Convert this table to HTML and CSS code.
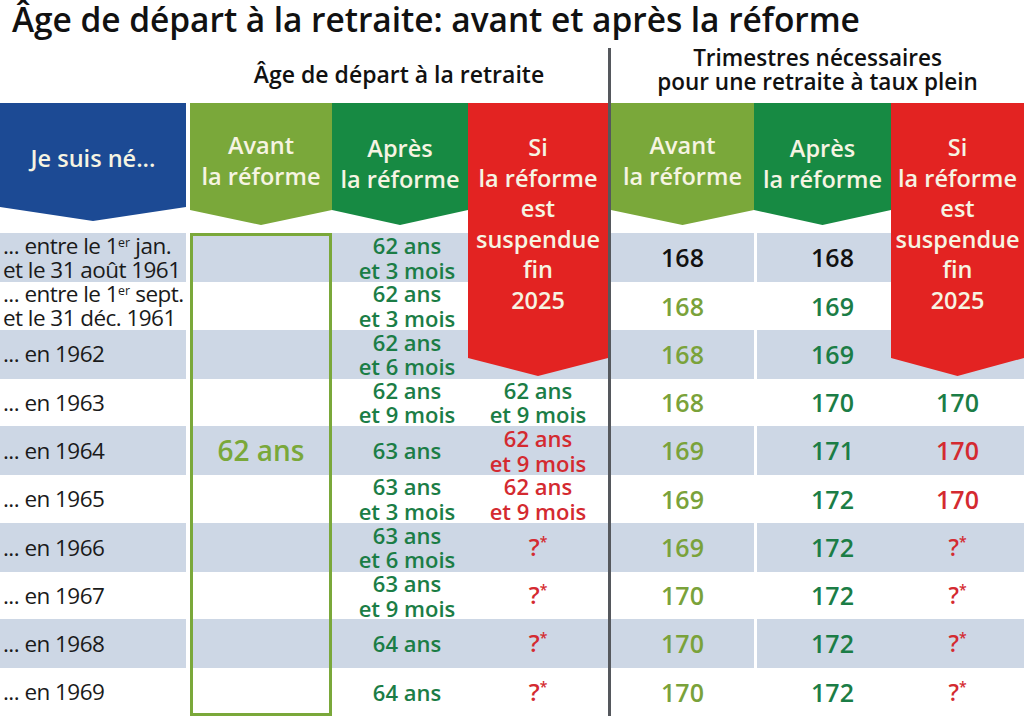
FILE: index.html
```html
<!DOCTYPE html>
<html lang="fr">
<head>
<meta charset="utf-8">
<title>Âge de départ à la retraite</title>
<link rel="stylesheet" href="styles.css">
</head>
<body>
<h1 class="title">Âge de départ à la retraite: avant et après la réforme</h1>
<div class="table">
  <div class="row section">
    <div class="sec-left">Âge de départ à la retraite</div>
    <div class="sep sep-top"></div>
    <div class="sec-right">Trimestres nécessaires<br>pour une retraite à taux plein</div>
  </div>
  <div class="row head">
    <div class="hd blue">Je suis né...</div>
    <div class="gap"></div>
    <div class="hd lg">Avant<br>la réforme</div>
    <div class="hd dg">Après<br>la réforme</div>
    <div class="hd red">Si<br>la réforme<br>est<br>suspendue<br>fin<br>2025</div>
    <div class="sep"></div>
    <div class="hd lg">Avant<br>la réforme</div>
    <div class="hd dg">Après<br>la réforme</div>
    <div class="hd red">Si<br>la réforme<br>est<br>suspendue<br>fin<br>2025</div>
  </div>

  <div class="row data odd">
    <div class="c born"><span>... entre le 1<sup>er</sup> jan.<br>et le 31 août 1961</span></div>
    <div class="gap"></div>
    <div class="c box first"></div>
    <div class="c after"><span>62 ans<br>et 3 mois</span></div>
    <div class="c susp"></div>
    <div class="sep"></div>
    <div class="c qb black"><span>168</span></div>
    <div class="c qa black"><span>168</span></div>
    <div class="c qs"></div>
  </div>
  <div class="row data">
    <div class="c born"><span>... entre le 1<sup>er</sup> sept.<br>et le 31 déc. 1961</span></div>
    <div class="gap"></div>
    <div class="c box"></div>
    <div class="c after"><span>62 ans<br>et 3 mois</span></div>
    <div class="c susp"></div>
    <div class="sep"></div>
    <div class="c qb"><span>168</span></div>
    <div class="c qa"><span>169</span></div>
    <div class="c qs"></div>
  </div>
  <div class="row data odd">
    <div class="c born"><span>... en 1962</span></div>
    <div class="gap"></div>
    <div class="c box"></div>
    <div class="c after"><span>62 ans<br>et 6 mois</span></div>
    <div class="c susp"></div>
    <div class="sep"></div>
    <div class="c qb"><span>168</span></div>
    <div class="c qa"><span>169</span></div>
    <div class="c qs"></div>
  </div>
  <div class="row data">
    <div class="c born"><span>... en 1963</span></div>
    <div class="gap"></div>
    <div class="c box"></div>
    <div class="c after"><span>62 ans<br>et 9 mois</span></div>
    <div class="c susp ok"><span>62 ans<br>et 9 mois</span></div>
    <div class="sep"></div>
    <div class="c qb"><span>168</span></div>
    <div class="c qa"><span>170</span></div>
    <div class="c qs ok"><span>170</span></div>
  </div>
  <div class="row data odd">
    <div class="c born"><span>... en 1964</span></div>
    <div class="gap"></div>
    <div class="c box big"><span>62 ans</span></div>
    <div class="c after"><span>63 ans</span></div>
    <div class="c susp ko"><span>62 ans<br>et 9 mois</span></div>
    <div class="sep"></div>
    <div class="c qb"><span>169</span></div>
    <div class="c qa"><span>171</span></div>
    <div class="c qs ko"><span>170</span></div>
  </div>
  <div class="row data">
    <div class="c born"><span>... en 1965</span></div>
    <div class="gap"></div>
    <div class="c box"></div>
    <div class="c after"><span>63 ans<br>et 3 mois</span></div>
    <div class="c susp ko"><span>62 ans<br>et 9 mois</span></div>
    <div class="sep"></div>
    <div class="c qb"><span>169</span></div>
    <div class="c qa"><span>172</span></div>
    <div class="c qs ko"><span>170</span></div>
  </div>
  <div class="row data odd">
    <div class="c born"><span>... en 1966</span></div>
    <div class="gap"></div>
    <div class="c box"></div>
    <div class="c after"><span>63 ans<br>et 6 mois</span></div>
    <div class="c susp ko qm"><span>?<sup>*</sup></span></div>
    <div class="sep"></div>
    <div class="c qb"><span>169</span></div>
    <div class="c qa"><span>172</span></div>
    <div class="c qs ko qm"><span>?<sup>*</sup></span></div>
  </div>
  <div class="row data">
    <div class="c born"><span>... en 1967</span></div>
    <div class="gap"></div>
    <div class="c box"></div>
    <div class="c after"><span>63 ans<br>et 9 mois</span></div>
    <div class="c susp ko qm"><span>?<sup>*</sup></span></div>
    <div class="sep"></div>
    <div class="c qb"><span>170</span></div>
    <div class="c qa"><span>172</span></div>
    <div class="c qs ko qm"><span>?<sup>*</sup></span></div>
  </div>
  <div class="row data odd">
    <div class="c born"><span>... en 1968</span></div>
    <div class="gap"></div>
    <div class="c box"></div>
    <div class="c after"><span>64 ans</span></div>
    <div class="c susp ko qm"><span>?<sup>*</sup></span></div>
    <div class="sep"></div>
    <div class="c qb"><span>170</span></div>
    <div class="c qa"><span>172</span></div>
    <div class="c qs ko qm"><span>?<sup>*</sup></span></div>
  </div>
  <div class="row data">
    <div class="c born"><span>... en 1969</span></div>
    <div class="gap"></div>
    <div class="c box last"></div>
    <div class="c after"><span>64 ans</span></div>
    <div class="c susp ko qm"><span>?<sup>*</sup></span></div>
    <div class="sep"></div>
    <div class="c qb"><span>170</span></div>
    <div class="c qa"><span>172</span></div>
    <div class="c qs ko qm"><span>?<sup>*</sup></span></div>
  </div>
</div>
</body>
</html>
```

FILE: styles.css
```css
* {
  box-sizing: border-box;
  margin: 0;
  padding: 0;
}

body {
  width: 1024px;
  height: 728px;
  overflow: hidden;
  background: #ffffff;
  font-family: "Open Sans", "Noto Sans", sans-serif;
  color: #1a1a1a;
}

.title {
  height: 44px;
  padding-left: 12px;
  font-size: 33.5px;
  font-weight: 600;
  line-height: 38px;
  letter-spacing: -0.05px;
  color: #111111;
  white-space: nowrap;
}

.row {
  display: grid;
  grid-template-columns: 186px 4px 142px 136px 140px 3px 143px 137px 133px;
}

.section {
  height: 59px;
}

.sec-left {
  grid-column: 3 / 6;
  text-align: center;
  font-size: 23px;
  font-weight: 600;
  line-height: 28px;
  padding-top: 16px;
  color: #111111;
  white-space: nowrap;
}

.sec-right {
  grid-column: 7 / 10;
  text-align: center;
  font-size: 22.5px;
  font-weight: 600;
  line-height: 24px;
  padding-top: 2px;
  color: #111111;
  white-space: nowrap;
}

.sep {
  background: #55585d;
}

.sep-top {
  margin-top: 4px;
}

.head {
  height: 130px;
}

.hd {
  align-self: start;
  color: #f6f4e2;
  font-weight: 600;
  font-size: 23.5px;
  line-height: 30.5px;
  text-align: center;
  white-space: nowrap;
}

.blue {
  background: #1c4a94;
  height: 118px;
  padding-top: 40px;
  clip-path: polygon(0 0, 100% 0, 100% 104px, 50% 118px, 0 104px);
}

.lg {
  background: #7aa83a;
  height: 122px;
  padding-top: 27px;
  clip-path: polygon(0 0, 100% 0, 100% 107px, 50% 122px, 0 107px);
}

.dg {
  background: #178a43;
  height: 122px;
  padding-top: 30px;
  clip-path: polygon(0 0, 100% 0, 100% 107px, 50% 122px, 0 107px);
}

.red {
  position: relative;
  z-index: 2;
  background: #e32322;
  height: 273px;
  padding-top: 29px;
  clip-path: polygon(0 0, 100% 0, 100% 255px, 50% 273px, 0 255px);
}

.data {
  height: 48.3px;
}

.odd > * {
  background: #cdd7e5;
}

.data > .gap {
  background: #ffffff;
}

.data > .sep {
  background: #55585d;
}

.c {
  display: flex;
  align-items: center;
  justify-content: center;
  text-align: center;
  font-weight: 600;
  font-size: 22px;
  line-height: 24.5px;
  white-space: nowrap;
}

.born {
  justify-content: flex-start;
  text-align: left;
  font-weight: 400;
  font-size: 22.5px;
  line-height: 23.5px;
  padding-left: 3px;
  letter-spacing: -0.55px;
  color: #1a1a1a;
}

sup {
  font-size: 0.55em;
  vertical-align: 0.6em;
  line-height: 0;
  letter-spacing: 0;
}

.box {
  border-left: 3px solid #7aa83a;
  border-right: 3px solid #7aa83a;
  color: #7aa83a;
}

.box.first {
  border-top: 3px solid #7aa83a;
}

.box.last {
  border-bottom: 3px solid #7aa83a;
}

.box.big {
  font-size: 28px;
}

.after {
  color: #1b7d46;
  padding-left: 14px;
}

.ok {
  color: #1b7d46;
}

.ko {
  color: #d42a30;
}

.qm {
  font-size: 24px;
}

.qm sup {
  font-size: 14px;
  vertical-align: 9px;
}

.qb {
  color: #7aa23a;
  font-size: 25px;
}

.qa {
  color: #1b7d46;
  font-size: 25px;
  padding-left: 17px;
  border-left: 3px solid #ffffff;
}

.qs {
  font-size: 25px;
}

.qs.qm {
  font-size: 23px;
}

.qb.black,
.qa.black {
  color: #111111;
}
```
